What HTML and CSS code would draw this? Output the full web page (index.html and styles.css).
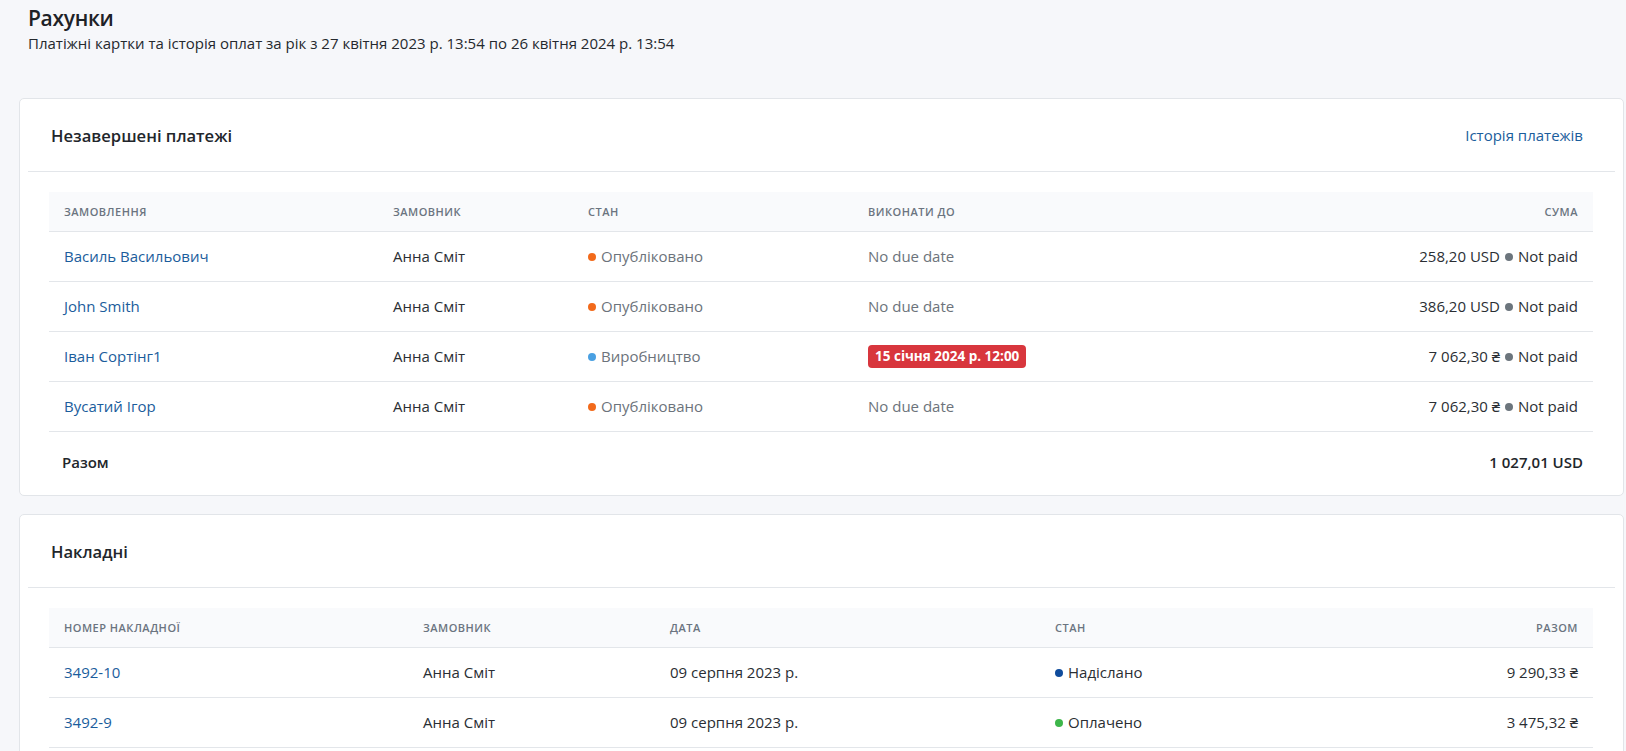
FILE: index.html
```html
<!DOCTYPE html>
<html lang="uk">
<head>
<meta charset="utf-8">
<title>Рахунки</title>
<link rel="stylesheet" href="styles.css">
</head>
<body>
<div class="page">
  <header class="page-head">
    <h1 class="page-title">Рахунки</h1>
    <p class="page-sub">Платіжні картки та історія оплат за рік з 27 квітня 2023 р. 13:54 по 26 квітня 2024 р. 13:54</p>
  </header>

  <section class="card">
    <div class="card-head">
      <h2 class="card-title">Незавершені платежі</h2>
      <a class="link head-link" href="#">Історія платежів</a>
    </div>
    <div class="card-body">
      <table class="tbl">
        <thead>
          <tr>
            <th class="w1-order">Замовлення</th>
            <th class="w1-client">Замовник</th>
            <th class="w1-state">Стан</th>
            <th class="w1-due">Виконати до</th>
            <th class="num">Сума</th>
          </tr>
        </thead>
        <tbody>
          <tr>
            <td><a class="link" href="#">Василь Васильович</a></td>
            <td>Анна Сміт</td>
            <td class="muted"><span class="dot orange"></span>Опубліковано</td>
            <td class="muted">No due date</td>
            <td class="num">258,20 USD<span class="dot gray mid"></span>Not paid</td>
          </tr>
          <tr>
            <td><a class="link" href="#">John Smith</a></td>
            <td>Анна Сміт</td>
            <td class="muted"><span class="dot orange"></span>Опубліковано</td>
            <td class="muted">No due date</td>
            <td class="num">386,20 USD<span class="dot gray mid"></span>Not paid</td>
          </tr>
          <tr>
            <td><a class="link" href="#">Іван Сортінг1</a></td>
            <td>Анна Сміт</td>
            <td class="muted"><span class="dot sky"></span>Виробництво</td>
            <td><span class="badge">15 січня 2024 р. 12:00</span></td>
            <td class="num">7 062,30 ₴<span class="dot gray mid"></span>Not paid</td>
          </tr>
          <tr>
            <td><a class="link" href="#">Вусатий Ігор</a></td>
            <td>Анна Сміт</td>
            <td class="muted"><span class="dot orange"></span>Опубліковано</td>
            <td class="muted">No due date</td>
            <td class="num">7 062,30 ₴<span class="dot gray mid"></span>Not paid</td>
          </tr>
        </tbody>
      </table>
      <div class="total">
        <span>Разом</span>
        <span>1 027,01 USD</span>
      </div>
    </div>
  </section>

  <section class="card">
    <div class="card-head">
      <h2 class="card-title">Накладні</h2>
    </div>
    <div class="card-body pad-bottom">
      <table class="tbl">
        <thead>
          <tr>
            <th class="w2-num">Номер накладної</th>
            <th class="w2-client">Замовник</th>
            <th class="w2-date">Дата</th>
            <th class="w2-state">Стан</th>
            <th class="num">Разом</th>
          </tr>
        </thead>
        <tbody>
          <tr>
            <td><a class="link" href="#">3492-10</a></td>
            <td>Анна Сміт</td>
            <td>09 серпня 2023 р.</td>
            <td><span class="dot navy"></span>Надіслано</td>
            <td class="num">9 290,33 ₴</td>
          </tr>
          <tr>
            <td><a class="link" href="#">3492-9</a></td>
            <td>Анна Сміт</td>
            <td>09 серпня 2023 р.</td>
            <td><span class="dot green"></span>Оплачено</td>
            <td class="num">3 475,32 ₴</td>
          </tr>
        </tbody>
      </table>
    </div>
  </section>
</div>
</body>
</html>
```

FILE: styles.css
```css
* { box-sizing: border-box; }

html, body {
  margin: 0;
  padding: 0;
  background: #f6f7fa;
}

body {
  font-family: "Open Sans", "Noto Sans", "Liberation Sans", sans-serif;
  color: #2a2e33;
  font-size: 15px;
}

.page {
  padding: 3px 2px 40px 19px;
}

.page-head {
  padding-left: 9px;
  margin-bottom: 45px;
}

.page-title {
  margin: 0;
  font-size: 21px;
  line-height: 30px;
  font-weight: 600;
  letter-spacing: -0.3px;
  color: #1e2227;
}

.page-sub {
  margin: 0;
  font-size: 15px;
  line-height: 20px;
  color: #25292e;
}

.card {
  background: #ffffff;
  border: 1px solid #e2e5e9;
  border-radius: 5px;
  padding: 0 8px;
  margin-bottom: 18px;
}

.card-head {
  height: 73px;
  display: flex;
  align-items: center;
  justify-content: space-between;
  padding: 0 32px 0 23px;
  border-bottom: 1px solid #e3e6ea;
}

.card-title {
  margin: 0;
  font-size: 16.6px;
  font-weight: 600;
  color: #22262b;
}

.link {
  color: #1b5d9c;
  text-decoration: none;
}

.head-link {
  font-size: 15px;
}

.card-body {
  padding: 20px 22px 0 21px;
}

.card-body.pad-bottom {
  padding-bottom: 30px;
}

.tbl {
  width: 100%;
  border-collapse: separate;
  border-spacing: 0;
  table-layout: fixed;
}

.tbl th {
  background: #f9fafc;
  text-align: left;
  font-size: 11px;
  line-height: 16px;
  font-weight: 600;
  letter-spacing: 0.5px;
  text-transform: uppercase;
  color: #6b7480;
  padding: 12px 15px 11px;
  border-bottom: 1px solid #e3e6ea;
  white-space: nowrap;
}

.tbl td {
  font-size: 15px;
  line-height: 23px;
  padding: 13px 15px;
  border-bottom: 1px solid #e3e6ea;
  color: #2a2e33;
  white-space: nowrap;
}

.tbl .num {
  text-align: right;
}

.tbl td.muted {
  color: #6c737b;
}

.w1-order { width: 329px; }
.w1-client { width: 195px; }
.w1-state { width: 280px; }
.w1-due { width: 400px; }

.w2-num { width: 359px; }
.w2-client { width: 247px; }
.w2-date { width: 385px; }
.w2-state { width: 300px; }

.dot {
  display: inline-block;
  width: 8px;
  height: 8px;
  border-radius: 50%;
  margin-right: 5px;
  vertical-align: 1px;
}

.dot.mid {
  margin: 0 5px 0 5px;
}

.orange { background: #f26a1b; }
.sky { background: #4aa0e2; }
.gray { background: #6c757d; }
.navy { background: #0f4c9c; }
.green { background: #3db64a; }

.badge {
  display: inline-block;
  background: #d8363d;
  color: #ffffff;
  font-size: 13.5px;
  font-weight: 700;
  line-height: 23px;
  height: 23px;
  padding: 0 7px;
  border-radius: 4px;
  vertical-align: top;
}

.total {
  height: 63px;
  display: flex;
  align-items: center;
  justify-content: space-between;
  padding: 0 10px 4px 13px;
  font-size: 15px;
  font-weight: 600;
  color: #22262b;
}
```
